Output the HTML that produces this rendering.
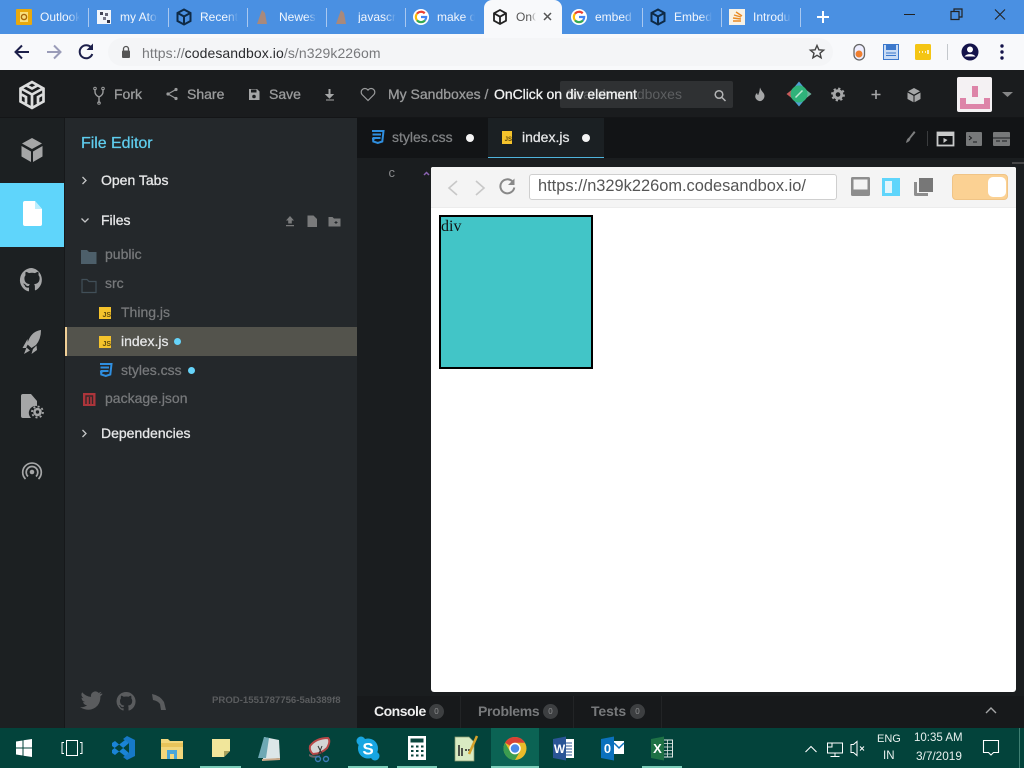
<!DOCTYPE html>
<html><head><meta charset="utf-8">
<style>
html,body{margin:0;padding:0;width:1024px;height:768px;overflow:hidden;background:#16181a}
body{position:relative;font-family:"Liberation Sans",sans-serif}
.b{position:absolute}
.t{position:absolute;white-space:nowrap;line-height:1}
svg{position:absolute;overflow:visible}
.tab{font-size:12px;color:#f2f6fd;top:11px;overflow:hidden;-webkit-mask-image:linear-gradient(90deg,#000 70%,transparent 100%);mask-image:linear-gradient(90deg,#000 70%,transparent 100%)}
.sep{position:absolute;top:8px;width:1px;height:19px;background:#a9c8f0}
.hd{font-size:14px;color:#9a9b9c;top:87px;-webkit-text-stroke:.3px #9a9b9c}
.side{font-size:14px;color:#e6e7e8;-webkit-text-stroke:.3px #e6e7e8}
.file{font-size:14px;color:#77797b;-webkit-text-stroke:.25px #77797b}
.js{position:absolute;width:12px;height:12px;background:#f5c32c;font-size:7px;font-weight:bold;text-align:right;line-height:17px;overflow:hidden;color:#5f4a0c}
.dot{position:absolute;width:7px;height:7px;border-radius:50%;background:#66d4fa}
.badge{position:absolute;top:704px;width:15px;height:15px;border-radius:50%;background:#3d3f41;color:#8d8e8f;font-size:8px;line-height:15px;text-align:center}
.con{position:absolute;top:704px;white-space:nowrap;line-height:1;font-size:14px;font-weight:bold;color:#77797b;letter-spacing:-.3px}
</style></head><body>

<!-- Chrome tab strip -->
<div class="b" style="left:0;top:0;width:1024px;height:34px;background:#4a90e2"></div>
<div class="b" style="left:484px;top:0;width:78px;height:34px;background:#f8f9fb;border-radius:8px 8px 0 0"></div>
<svg style="left:0;top:0" width="1024" height="34">
<rect x="16" y="9" width="16" height="16" rx="1" fill="#e9a90d"/><rect x="20" y="12" width="8" height="10" fill="#f8de7c"/><circle cx="24" cy="17" r="2.6" fill="none" stroke="#a8650a" stroke-width="1.4"/>
<rect x="97" y="10" width="14" height="14" fill="#f2f5fa"/><rect x="100" y="12" width="3" height="3" fill="#445"/><rect x="105" y="13" width="3" height="3" fill="#667"/><rect x="103" y="17" width="3" height="3" fill="#778"/><rect x="107" y="20" width="3" height="3" fill="#334"/>
<g fill="none" stroke="#0e2a46" stroke-width="2"><path d="M184 9.500l6.500 3.500v8l-6.500 3.500-6.500-3.500v-8zM177.700 13l6.300 3.500 6.300-3.500M184 16.500v8"/></g>
<path d="M257 24l5-14 3 3 2 11z" fill="#a8897c"/><path d="M336 24l5-14 3 3 2 11z" fill="#a8897c"/>
<rect x="729" y="9" width="16" height="16" fill="#f8f2e6"/><path d="M733 21h8M733 18l8 1M734 15l7 2M736 12l6 4" stroke="#e98a25" stroke-width="1.400" fill="none"/>
<g fill="none" stroke="#0e2a46" stroke-width="2"><path d="M658 9.500l6.500 3.500v8l-6.500 3.500-6.500-3.500v-8zM651.700 13l6.300 3.500 6.300-3.500M658 16.500v8"/></g>
<g fill="none" stroke="#222" stroke-width="1.800"><path d="M500 10l6 3.300v7.400l-6 3.300-6-3.300v-7.400zM494 13.300l6 3.400 6-3.400M500 16.700v7"/></g>
<g fill="none" stroke-width="2.200">
<g transform="translate(421 17)"><circle r="8" fill="#fff" stroke="none"/><path d="M3.700 -3.700A5.200 5.200 0 0 0 -4 -3.300" stroke="#ea4335"/><path d="M-4 -3.300A5.200 5.200 0 0 0 -4 3.300" stroke="#fbbc05"/><path d="M-4 3.300A5.200 5.200 0 0 0 4 3.300" stroke="#34a853"/><path d="M4 3.300A5.200 5.200 0 0 0 5.200 0H0" stroke="#4285f4"/></g>
<g transform="translate(579 17)"><circle r="8" fill="#fff" stroke="none"/><path d="M3.700 -3.700A5.200 5.200 0 0 0 -4 -3.300" stroke="#ea4335"/><path d="M-4 -3.300A5.200 5.200 0 0 0 -4 3.300" stroke="#fbbc05"/><path d="M-4 3.300A5.200 5.200 0 0 0 4 3.300" stroke="#34a853"/><path d="M4 3.300A5.200 5.200 0 0 0 5.200 0H0" stroke="#4285f4"/></g>
</g>
<path d="M544 13l7 7M551 13l-7 7" stroke="#555" stroke-width="1.500"/>
<path d="M823 11v12M817 17h12" stroke="#fff" stroke-width="2"/>
<path d="M904 14.500h11" stroke="#222" stroke-width="1"/>
<path d="M951 11.500h8v8h-8zM954 11.500v-2.500h8v8h-2.500" fill="none" stroke="#222" stroke-width="1.200"/>
<path d="M995 9.500l10 10M1005 9.500l-10 10" stroke="#222" stroke-width="1.100"/>
</svg>
<div class="t tab" style="left:40px;width:40px">Outlook</div><div class="sep" style="left:88px"></div>
<div class="t tab" style="left:120px;width:38px">my Atom</div><div class="sep" style="left:168px"></div>
<div class="t tab" style="left:200px;width:38px">Recent</div><div class="sep" style="left:247px"></div>
<div class="t tab" style="left:279px;width:38px">Newest</div><div class="sep" style="left:326px"></div>
<div class="t tab" style="left:358px;width:38px">javascript</div><div class="sep" style="left:405px"></div>
<div class="t tab" style="left:437px;width:38px">make div</div>
<div class="t tab" style="left:516px;width:20px;color:#555">OnClick</div>
<div class="t tab" style="left:595px;width:40px">embed</div><div class="sep" style="left:642px"></div>
<div class="t tab" style="left:674px;width:38px">Embed</div><div class="sep" style="left:721px"></div>
<div class="t tab" style="left:753px;width:38px">Introduction</div><div class="sep" style="left:800px"></div>

<!-- Chrome toolbar -->
<div class="b" style="left:0;top:34px;width:1024px;height:36px;background:#f8f9fb"></div>
<div class="b" style="left:108px;top:38px;width:725px;height:28px;border-radius:14px;background:#f4f5f7"></div>
<svg style="left:0;top:34px" width="1024" height="36">
<path d="M29 18H16M22 11.500l-6.500 6.500 6.500 6.500" fill="none" stroke="#1c1f4a" stroke-width="2"/>
<path d="M47 18h13M54 11.500l6.500 6.500-6.500 6.500" fill="none" stroke="#9a9cb8" stroke-width="2"/>
<path d="M91.500 14a6.500 6.500 0 1 0 .8 6" fill="none" stroke="#1c1f4a" stroke-width="2"/><path d="M93 9.500v6.500h-6.500z" fill="#1c1f4a"/>
<rect x="122" y="16.500" width="8" height="7.500" rx="1" fill="#555"/><path d="M123.500 16.500v-1.500a2.500 2.500 0 0 1 5 0v1.500" fill="none" stroke="#555" stroke-width="1.300"/>
<path d="M817 11.500l1.900 4.300 4.700.4-3.600 3 1.100 4.600-4.100-2.500-4.100 2.500 1.100-4.600-3.600-3 4.700-.4z" fill="none" stroke="#444" stroke-width="1.400"/>
<rect x="854" y="10.500" width="10.500" height="15.500" rx="5.200" fill="#eef" stroke="#666" stroke-width="1.300"/><circle cx="859" cy="20" r="3.500" fill="#ef7f2e"/>
<rect x="883.500" y="10.500" width="15" height="15" fill="#c9dcf5" stroke="#3b78cc"/><rect x="886" y="11" width="10" height="5" fill="#3b78cc"/><path d="M886 19h10M886 21.500h10" stroke="#3b78cc"/>
<rect x="915" y="10" width="16" height="16" rx="1.500" fill="#f4c514"/><path d="M919 18h1M922 18h1M925 18h1M928 16v4" stroke="#fff" stroke-width="1.500"/>
<path d="M947.500 10v16" stroke="#c4c8cc"/>
<circle cx="970" cy="18" r="8.500" fill="#14134a"/><circle cx="970" cy="15.500" r="3" fill="#fff"/><path d="M964.500 22.500a6 4 0 0 1 11 0z" fill="#fff"/>
<circle cx="1002" cy="12" r="1.700" fill="#14134a"/><circle cx="1002" cy="18" r="1.700" fill="#14134a"/><circle cx="1002" cy="24" r="1.700" fill="#14134a"/>
</svg>
<div class="t" style="left:142px;top:45.500px;font-size:14px;color:#78797c;letter-spacing:.08px">https://<span style="color:#2b2c2f">codesandbox.io</span>/s/n329k226om</div>

<!-- App header -->
<div class="b" style="left:0;top:70px;width:1024px;height:48px;background:#1a1c1e;border-bottom:1px solid #141517;box-sizing:border-box"></div>
<svg style="left:0;top:70px" width="1024" height="48">
<path d="M32 12l11.500 6.500v13l-11.500 6.500-11.500-6.500v-13zM21 18.500l11 6 11-6M32 24.500v13M26.500 15.500l5.500 3 5.500-3M21.500 24.500l4.500 2.500v6.500M42.500 24.500l-4.500 2.500v6.500" fill="none" stroke="#dcdddd" stroke-width="2.700"/>
<path d="M95 19v3q0 3 4 5v6M103 19v3q0 3-4 5" fill="none" stroke="#9a9b9c" stroke-width="1.400"/><circle cx="95" cy="18.500" r="1.300" fill="none" stroke="#9a9b9c"/><circle cx="103" cy="18.500" r="1.300" fill="none" stroke="#9a9b9c"/><circle cx="99" cy="33" r="1.300" fill="none" stroke="#9a9b9c"/>
<path d="M176 19.500l-8 4.500 8 4.500" fill="none" stroke="#9a9b9c" stroke-width="1.200"/><circle cx="176" cy="19.500" r="1.600" fill="#9a9b9c"/><circle cx="168" cy="24" r="1.600" fill="#9a9b9c"/><circle cx="176" cy="28.500" r="1.600" fill="#9a9b9c"/>
<path d="M249 19h8l2.500 2.500v8.500h-10.500z" fill="#a5a6a7"/><rect x="251" y="19.500" width="5.500" height="3" fill="#1a1c1e"/><circle cx="254" cy="26.500" r="1.800" fill="#1a1c1e"/>
<path d="M330 19.500v5h3l-3.500 3.500-3.500-3.500h3v-5h1zM326 30h8" fill="#a5a6a7" stroke="#a5a6a7" stroke-width="1"/>
<path d="M368 30.500l-6-6a3.700 3.700 0 0 1 5.200-5.200l.8.800.8-.8a3.700 3.700 0 0 1 5.200 5.200z" fill="none" stroke="#9a9b9c" stroke-width="1.200"/>
</svg>
<div class="t hd" style="left:114px">Fork</div>
<div class="t hd" style="left:187px">Share</div>
<div class="t hd" style="left:269px">Save</div>
<div class="t hd" style="left:388px">My Sandboxes</div>
<div class="t hd" style="left:484.500px">/</div>
<div class="b" style="left:560px;top:81px;width:173px;height:27px;border-radius:2px;background:#2f3133"></div>
<div class="t hd" style="left:566px;color:#5d5f61;-webkit-text-stroke:0">Search sandboxes</div>
<div class="t hd" style="left:494px;color:#f2f3f3;-webkit-text-stroke:.3px #f2f3f3;letter-spacing:-.05px">OnClick on div element</div>
<svg style="left:0;top:70px" width="1024" height="48">
<circle cx="719" cy="24.500" r="3.800" fill="none" stroke="#b3b4b5" stroke-width="1.500"/><path d="M722 27.500l3.500 3.500" stroke="#b3b4b5" stroke-width="1.500"/>
<path d="M760 17.500q1 3 3.500 5.500q2 3 0 6q-2 2.500-4.500 2q-3-1-3.800-4q0-3 2-4q0 2 1 2q1.500-3.500 1.800-7.500z" fill="#a5a6a7"/>
<path d="M799 11.500l5 6-5-1-5 1z" fill="#4f9fd0"/><path d="M799 36.500l5-6-5 1-5-1z" fill="#4f9fd0"/>
<path d="M786.500 24l7-5.500v11z" fill="#c75b5b"/><path d="M811.500 24l-7-5.500v11z" fill="#6bb09a"/>
<circle cx="799" cy="24" r="8.500" fill="#2fb37a"/><path d="M795.500 27.500l7-7" stroke="#bde8d2" stroke-width="1.500"/>
<circle cx="838" cy="24.500" r="3.800" fill="none" stroke="#a5a6a7" stroke-width="3"/><circle cx="838" cy="24.500" r="6" fill="none" stroke="#a5a6a7" stroke-width="1.800" stroke-dasharray="2.300 2.400"/>
<path d="M876 20v9M871.500 24.500h9" stroke="#a5a6a7" stroke-width="1.600"/>
<path d="M914 18l6 3.300-6 3.300-6-3.300zM907.500 22.500l6 3.300v6.500l-6-3.300zM920.500 22.500l-6 3.300v6.500l6-3.300z" fill="#a5a6a7"/>
<path d="M1002 23h11l-5.500 5z" transform="translate(0 -1)" fill="#858687"/>
</svg>
<div class="b" style="left:957px;top:77px;width:35px;height:35px;border-radius:2px;background:#f4f1f3"></div>
<div class="b" style="left:972px;top:86px;width:6px;height:11px;background:#dd84a8"></div>
<div class="b" style="left:960px;top:98px;width:6px;height:11px;background:#dd84a8"></div>
<div class="b" style="left:984px;top:98px;width:6px;height:11px;background:#dd84a8"></div>
<div class="b" style="left:960px;top:104px;width:30px;height:5px;background:#dd84a8"></div>

<!-- Left activity bar -->
<div class="b" style="left:0;top:118px;width:64px;height:610px;background:#1c2022"></div>
<div class="b" style="left:0;top:183px;width:64px;height:64px;background:#5fd5fb"></div>
<svg style="left:0;top:118px" width="64" height="420">
<path d="M32 20l10 5.500-10 5.500-10-5.500zM21.500 28l9.500 5.500v10.500l-9.500-5.500zM42.500 28l-9.500 5.500v10.500l9.500-5.500z" fill="#a5a6a7"/>
<path d="M23 85q0-2 2-2h10l7 8v15q0 2-2 2h-15q-2 0-2-2z" fill="#fff"/><path d="M35 83l7 8h-7z" fill="#bdeefd"/>
<path fill="#a5a6a7" d="M32 150a12 12 0 0 0-3.800 23.400c.6.100.8-.3.800-.6v-3.300c-3.300.7-4-1.400-4-1.400-.6-1.400-1.300-1.800-1.300-1.800-1.100-.7.100-.7.100-.7 1.200.1 1.800 1.200 1.800 1.200 1.100 1.800 2.800 1.300 3.500 1 .1-.8.400-1.300.8-1.600-2.700-.3-5.500-1.300-5.500-5.900 0-1.300.5-2.400 1.200-3.200-.1-.3-.5-1.500.1-3.200 0 0 1-.3 3.300 1.200a11.500 11.500 0 0 1 6 0c2.300-1.500 3.300-1.200 3.300-1.200.6 1.700.2 2.900.1 3.200.8.800 1.200 1.900 1.200 3.200 0 4.600-2.800 5.600-5.500 5.900.4.400.8 1.100.8 2.200v3.300c0 .3.200.7.800.6A12 12 0 0 0 32 150z"/>
<path d="M41 212Q33 213 29 221L27 226L31.500 230L36 227Q41 221 41 212ZM27.500 221L22.500 230L26 230L28 226ZM36.500 227.500L33 231L31.500 236L37 232ZM26.500 229.500L24 236L30 232.500Z" fill="#a5a6a7"/>
<path d="M21 278q0-2 2-2h8l6 7v5a7 7 0 0 0-6 12h-8q-2 0-2-2z" fill="#a5a6a7"/><circle cx="37.500" cy="294" r="3" fill="none" stroke="#a5a6a7" stroke-width="2.600"/><circle cx="37.500" cy="294" r="5.500" fill="none" stroke="#a5a6a7" stroke-width="1.800" stroke-dasharray="2 2.300"/>
<circle cx="32" cy="354" r="2.300" fill="#a5a6a7"/><path d="M28 358.500a5.800 5.800 0 1 1 8 0M25.500 361a9.300 9.300 0 1 1 13 0" fill="none" stroke="#a5a6a7" stroke-width="1.700"/>
</svg>

<!-- Sidebar -->
<div class="b" style="left:65px;top:118px;width:292px;height:610px;background:#24282b"></div>
<div class="b" style="left:65px;top:327px;width:292px;height:29px;background:#53534c"></div>
<div class="b" style="left:65px;top:327px;width:2px;height:29px;background:#f0cf96"></div>
<div class="t" style="left:81px;top:136px;font-size:16px;color:#5fcdee;-webkit-text-stroke:.25px #5fcdee;letter-spacing:-.05px">File Editor</div>
<div class="t side" style="left:101px;top:173px">Open Tabs</div>
<div class="t side" style="left:101px;top:213px">Files</div>
<div class="t side" style="left:101px;top:426px">Dependencies</div>
<svg style="left:0;top:0" width="360" height="450">
<path d="M82.500 177l3.500 3.500-3.500 3.500M82.500 430l3.500 3.500-3.500 3.500" fill="none" stroke="#c5c6c7" stroke-width="1.300"/>
<path d="M81.500 218.500l3.500 3.500 3.500-3.500" fill="none" stroke="#c5c6c7" stroke-width="1.300"/>
<path d="M290 216l4 4.500h-2.200v3h-3.600v-3h-2.200zM286 225h8v1.300h-8z" fill="#797a7b"/>
<path d="M307.500 215.500h6l3.500 3.500v8h-9.500z" fill="#797a7b"/>
<path d="M328.500 217h4l1.500 1.500h6.500v8h-12z" fill="#797a7b"/><path d="M334.500 222.500h3M336 221v3" stroke="#24282b" stroke-width="1"/>
<path d="M81 250h6l2 2h7.500v12h-15.500z" fill="#4d5f6a"/>
<path d="M82 279.500h5l2 2h7v11h-14z" fill="none" stroke="#414f58" stroke-width="1.200"/>
<rect x="83" y="393" width="12.500" height="13" fill="#ad353b"/><path d="M86 404v-8h6.500v8M89.500 397v7" fill="none" stroke="#34282a" stroke-width="1.400"/>
<path d="M100 364h11.500l-1.200 10.500-4.500 1.500-4.500-1.500-.3-3h2.200M100.500 367.500h8.500M101 371h7.500" fill="none" stroke="#2f8fe0" stroke-width="2"/>
</svg>
<div class="js" style="left:99px;top:307px">JS</div>
<div class="js" style="left:99px;top:336px">JS</div>
<div class="t file" style="left:105px;top:247px">public</div>
<div class="t file" style="left:105px;top:276px">src</div>
<div class="t file" style="left:121px;top:305px">Thing.js</div>
<div class="t file" style="left:121px;top:334px;color:#e6e7e8;-webkit-text-stroke:.25px #e6e7e8">index.js</div>
<div class="t file" style="left:121px;top:363px">styles.css</div>
<div class="t file" style="left:105px;top:391px">package.json</div>
<div class="dot" style="left:174px;top:338px"></div>
<div class="dot" style="left:188px;top:367px"></div>
<svg style="left:0;top:680px" width="180" height="40">
<path fill="#5a5c5e" d="M102 14.500q-1.200.6-2.500.7 1.400-.8 1.900-2.400-1.300.8-2.800 1.100a4.400 4.400 0 0 0-7.500 4q-5.300-.3-9-4.600-1.900 3.400 1.400 5.900-1-.1-2-.6 0 3.400 3.500 4.400-1 .3-2 .1 1 3 4.100 3.100-3.200 2.400-7.100 2 10.500 5.700 17.500-1.600 3-3.400 2.900-9.300 1.300-1 2.100-2.300z" transform="translate(0 -1)"/>
<path fill="#5a5c5e" d="M126 12a9.500 9.500 0 0 0-3 18.500c.5.100.6-.2.600-.5v-1.700c-2.600.6-3.200-1.200-3.200-1.200-.4-1.100-1-1.400-1-1.400-.9-.6.100-.6.100-.6 1 .1 1.400 1 1.400 1 .9 1.500 2.300 1 2.800.8.100-.6.300-1 .6-1.300-2.100-.2-4.300-1-4.300-4.700 0-1 .4-1.900 1-2.600-.1-.2-.4-1.200.1-2.500 0 0 .8-.3 2.600 1a9 9 0 0 1 4.800 0c1.800-1.200 2.600-1 2.600-1 .5 1.300.2 2.300.1 2.500.6.700 1 1.600 1 2.600 0 3.700-2.200 4.500-4.300 4.700.3.300.6.800.6 1.700V30c0 .3.200.6.600.5A9.500 9.500 0 0 0 126 12z"/>
<path d="M152 14q8 1.500 12 8l2 8h-5l-1-6q-2-3-7-4z" fill="#5a5c5e"/>
</svg>
<div class="t" style="left:212px;top:696px;font-size:9.600px;font-weight:bold;color:#5a5c5e">PROD-1551787756-5ab389f8</div>

<!-- Editor area -->
<div class="b" style="left:357px;top:118px;width:667px;height:40px;background:#121416"></div>
<div class="b" style="left:357px;top:158px;width:667px;height:570px;background:#1a1d1f"></div>
<div class="b" style="left:488px;top:118px;width:116px;height:40px;background:#1b2023;border-bottom:1px solid #4fb4dc;box-sizing:border-box"></div>
<svg style="left:0;top:118px" width="1024" height="60">
<path d="M372 13h11.500l-1.200 10.500-4.500 1.500-4.500-1.500-.3-3h2.200M372.500 16.500h8.500M373 20h7.500" fill="none" stroke="#2f8fe0" stroke-width="2"/>
<path d="M914 13l1.500 1.500-5 6q-.3 3-4.500 4.500q.5-4 3-5.500z" fill="#7d7e7f"/>
<path d="M927.500 13v15" stroke="#3a3c3e"/>
<rect x="937.500" y="14.500" width="16" height="13" fill="none" stroke="#c9caca" stroke-width="1.800"/><path d="M937 15h17v3h-17zM943.500 20l4 2-4 3z" fill="#c9caca"/>
<rect x="966" y="14" width="16" height="14" rx="1" fill="#77797a"/><path d="M969 18l2.500 2-2.500 2M973 24h4" stroke="#1a1c1e" fill="none"/>
<rect x="993" y="14" width="17" height="14" rx="1" fill="#77797a"/><path d="M993 20h17M996 23h4M1002 23h5" stroke="#1a1c1e"/>
<path d="M1012 45h12" stroke="#555" stroke-width="1.500"/>
<path d="M424 57l2.500-2.500 2.500 2.500" fill="none" stroke="#8a62b0" stroke-width="1.500"/>
</svg>
<div class="js" style="left:502px;top:131px;height:13px;width:10px;line-height:18px;font-size:6px">JS</div>
<div class="t" style="left:392px;top:130px;font-size:14px;color:#818385;-webkit-text-stroke:.25px #818385">styles.css</div>
<div class="t" style="left:522px;top:130px;font-size:14px;color:#e6e7e8;-webkit-text-stroke:.25px #e6e7e8">index.js</div>
<div class="dot" style="left:466px;top:134px;background:#f4f4f4;width:8px;height:8px"></div>
<div class="dot" style="left:582px;top:134px;background:#f4f4f4;width:8px;height:8px"></div>
<div class="t" style="left:388.500px;top:165.500px;font-size:13px;color:#88898b">c</div>

<!-- Preview -->
<div class="b" style="left:431px;top:167px;width:585px;height:525px;background:#fff;border-radius:2px 2px 3px 3px"></div>
<div class="b" style="left:431px;top:167px;width:585px;height:41px;background:#f4f4f4;border-bottom:1px solid #ececec;box-sizing:border-box;border-radius:2px 2px 0 0"></div>
<div class="b" style="left:529px;top:174px;width:306px;height:24px;background:#fff;border:1px solid #cfcfcf;border-radius:3px"></div>
<div class="t" style="left:538px;top:178px;font-size:16.400px;color:#555">https://n329k226om.codesandbox.io/</div>
<svg style="left:0;top:160px" width="1024" height="50">
<path d="M457 21l-8 7 8 7M476 21l8 7-8 7" fill="none" stroke="#c8c8c8" stroke-width="1.600"/>
<path d="M512.500 21.500a7 7 0 1 0 1.800 6" fill="none" stroke="#888" stroke-width="2"/><path d="M514.500 18.500v6.500h-6.500z" fill="#888"/>
<rect x="851" y="17" width="19" height="19" rx="1.500" fill="#8d8d8d"/><rect x="853.500" y="19.500" width="14" height="10" fill="#f4f4f4"/>
<rect x="882" y="18" width="18" height="18" fill="#5fd5fb"/><rect x="885" y="21" width="7" height="12" fill="#e3f5fb"/>
<path d="M914 22v12.500q0 1.500 1.500 1.500h12.500v-3h-11v-11z" fill="#8d8d8d"/><path d="M919 18h14v14h-14z" fill="#777"/>
</svg>
<div class="b" style="left:952px;top:174px;width:56px;height:26px;border-radius:4px;background:#fbd193;border:1px solid #f0c486;box-sizing:border-box"></div>
<div class="b" style="left:988px;top:177px;width:18px;height:20px;border-radius:5px;background:#fff"></div>
<div class="b" style="left:439px;top:215px;width:154px;height:154px;box-sizing:border-box;border:2px solid #000;background:#42c5c7"></div>
<div class="t" style="left:441px;top:218.500px;font-size:16px;font-family:'Liberation Serif',serif;color:#111">div</div>

<!-- Console bar -->
<div class="b" style="left:357px;top:696px;width:667px;height:32px;background:#17191b"></div>
<div class="b" style="left:460px;top:696px;width:1px;height:32px;background:#222426"></div>
<div class="b" style="left:573px;top:696px;width:1px;height:32px;background:#222426"></div>
<div class="b" style="left:661px;top:696px;width:1px;height:32px;background:#222426"></div>
<div class="con" style="left:374px;color:#eee;letter-spacing:-.5px">Console</div>
<div class="badge" style="left:429px">0</div>
<div class="con" style="left:478px">Problems</div>
<div class="badge" style="left:543px">0</div>
<div class="con" style="left:591px;letter-spacing:-.1px">Tests</div>
<div class="badge" style="left:630px">0</div>
<svg style="left:980px;top:700px" width="24" height="20"><path d="M6 13l5-5 5 5" fill="none" stroke="#a5a6a7" stroke-width="1.400"/></svg>

<!-- Taskbar -->
<div class="b" style="left:0;top:728px;width:1024px;height:40px;background:#03433b"></div>
<div class="b" style="left:491px;top:728px;width:48px;height:40px;background:#0b6354"></div>
<div class="b" style="left:200px;top:766px;width:41px;height:2px;background:#7ccdb9"></div>
<div class="b" style="left:348px;top:766px;width:40px;height:2px;background:#7ccdb9"></div>
<div class="b" style="left:397px;top:766px;width:40px;height:2px;background:#7ccdb9"></div>
<div class="b" style="left:491px;top:766px;width:48px;height:2px;background:#7ccdb9"></div>
<div class="b" style="left:642px;top:766px;width:40px;height:2px;background:#7ccdb9"></div>
<svg style="left:0;top:728px" width="1024" height="40">
<path d="M16 13.500l6.500-1v7h-6.500zM23.500 12.300l8.500-1.300v8.500h-8.500zM16 20.500h6.500v7l-6.500-1zM23.500 20.500h8.500v8.500l-8.500-1.300z" fill="#fff"/>
<rect x="66.500" y="12.500" width="11" height="15" fill="none" stroke="#fff"/><path d="M64 14.500h-2v11h2M80 14.500h2v11h-2" fill="none" stroke="#fff"/>
<path d="M127 8L135 12V28L127 32L123 29L129 25V15L123 11Z" fill="#1679c7"/><path d="M112 15L115 13L129 25L125 28L112 18ZM112 25L115 27L129 15L125 12L112 22Z" fill="#1a84d6"/>
<path d="M161 11h7l2 2h13v18h-22z" fill="#f2d77c"/><path d="M161 15h22v4h-22z" fill="#e8c45a"/><rect x="167" y="22" width="10" height="9" fill="#4aa7d9"/><rect x="170" y="26" width="4" height="5" fill="#f2d77c"/>
<path d="M212 11h18v12l-6 6h-12z" fill="#f1e69b"/><path d="M224 29v-6h6z" fill="#a8a15c"/>
<path d="M264 9l15 3 1 18-17 2z" fill="#dce6e8"/><path d="M258 30l6-21 5 1-3 20z" fill="#6ea8b4"/><path d="M262 31l18-1v2l-18 1z" fill="#c9a98a"/>
<path d="M310 18q6-8 18-8q3 3-1 10q-6 6-14 6q-4-3-3-8z" fill="#d5d5d5" stroke="#b84747" stroke-width="2"/><path d="M309 26q5 3 11 1l-1 2q-6 2-10-1z" fill="#666"/><path d="M318 18l6 12M322 18l-4 10" stroke="#333"/><circle cx="326" cy="31" r="2.500" fill="none" stroke="#3d7bb8" stroke-width="1.400"/><circle cx="318" cy="31" r="2.500" fill="none" stroke="#3d7bb8" stroke-width="1.400"/>
<circle cx="361" cy="13" r="4.500" fill="#18a6e2"/><circle cx="375" cy="28" r="4.500" fill="#18a6e2"/><circle cx="368" cy="20.500" r="10" fill="#18a6e2"/>
<text x="368" y="26.500" text-anchor="middle" font-family="Liberation Sans" font-size="17" font-weight="bold" fill="#fff">S</text>
<rect x="408" y="8" width="18" height="24" fill="#fff"/><rect x="410.500" y="10.500" width="13" height="4" fill="#0a453c"/><path d="M411 18.500h2.500M416 18.500h2.500M421 18.500h2.500M411 23h2.500M416 23h2.500M421 23h2.500M411 27.500h2.500M416 27.500h2.500M421 27.500h2.500" stroke="#0a453c" stroke-width="2"/>
<path d="M455 9h14l5 5v19h-19z" fill="#d9ebc2" stroke="#8a9a70" stroke-width=".7"/><path d="M459 28v-11M462 28v-8M465 22h2M468 22h2" stroke="#222" stroke-width="1.500"/><path d="M477 8l-8 18" stroke="#d6a22b" stroke-width="2.500"/>
<circle cx="515" cy="20.500" r="11.500" fill="#e9bb2a"/>
<path d="M505.040 14.750A11.500 11.500 0 0 1 524.960 14.750H515A5.750 5.750 0 0 0 510 17.600Z" fill="#d84135"/>
<path d="M505.040 14.750A11.500 11.500 0 0 0 515 32L520 23.400A5.750 5.750 0 0 1 510 23.400Z" fill="#3b9d50"/>
<circle cx="515" cy="20.500" r="5" fill="#4b8ae8" stroke="#fff" stroke-width="1.500"/>
<rect x="564" y="11" width="10" height="19" fill="#fff"/><path d="M566 15h6M566 18h6M566 21h6M566 24h6M566 27h6" stroke="#2a5596"/>
<path d="M553 11l13-2.500v24l-13-2.500z" fill="#2a5596"/><text x="559.500" y="25" text-anchor="middle" font-family="Liberation Sans" font-size="12" font-weight="bold" fill="#fff">W</text>
<rect x="613" y="13" width="11" height="13" fill="#fff"/><path d="M614 15l5 5 5-5" fill="none" stroke="#0b71bd" stroke-width="1.500"/>
<path d="M601 11l13-2.500v24l-13-2.500z" fill="#0b71bd"/><text x="607.500" y="25" text-anchor="middle" font-family="Liberation Sans" font-size="13" font-weight="bold" fill="#fff">0</text>
<rect x="663" y="12" width="9.500" height="17" fill="#03433b" stroke="#dfe7e4"/><path d="M663 15.500h9M663 19h9M663 22.500h9M663 26h9M667.500 12v17" stroke="#dfe7e4" stroke-width=".8"/>
<path d="M651 11l13-2.500v24l-13-2.500z" fill="#1e7145"/><text x="657.500" y="25" text-anchor="middle" font-family="Liberation Sans" font-size="13" font-weight="bold" fill="#fff">X</text>
<path d="M805.500 24l5.500-5.500 5.500 5.500" fill="none" stroke="#fff" stroke-width="1.100"/>
<path d="M832 15h10.500v10h-15v-6M835 25v3M830.500 28.500h9" fill="none" stroke="#fff"/><rect x="827.500" y="15" width="4.500" height="4" fill="#03433b" stroke="#fff"/>
<path d="M851 16.500h2.500l3.500-3v14l-3.500-3h-2.500z" fill="none" stroke="#fff"/><path d="M860 18.500l4 4M864 18.500l-4 4" stroke="#fff"/>
<path d="M983.500 12.500h15v12h-5l-2.500 2.500-2.500-2.500h-5z" fill="none" stroke="#fff" stroke-width="1.100"/>
<path d="M1019.500 0v40" stroke="#3f7e72"/>
</svg>
<div class="t" style="left:877px;top:734px;font-size:11px;color:#e8f0ee">ENG</div>
<div class="t" style="left:883px;top:751px;font-size:11.500px;color:#e8f0ee">IN</div>
<div class="t" style="left:914px;top:733px;font-size:11.500px;color:#e8f0ee">10:35 AM</div>
<div class="t" style="left:916px;top:751px;font-size:11.800px;color:#e8f0ee">3/7/2019</div>
</body></html>
